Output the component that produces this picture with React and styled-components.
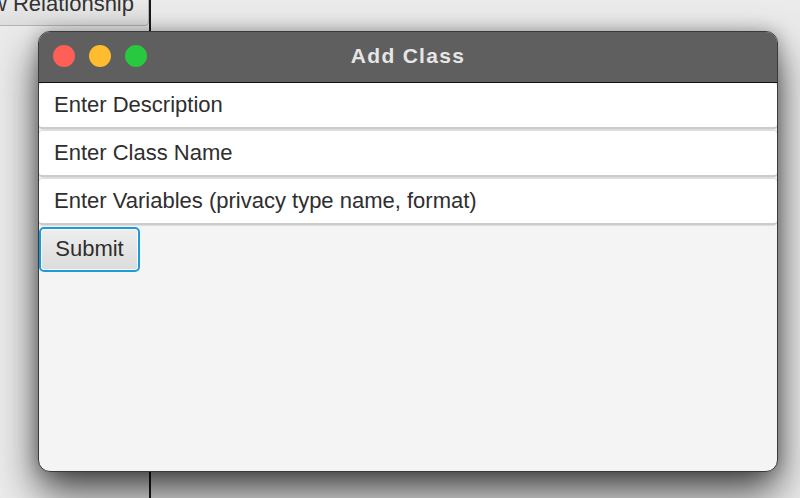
import styled, { createGlobalStyle } from 'styled-components';

const Global = createGlobalStyle`
  html, body { margin:0; padding:0; }
  body {
    width:800px; height:498px; overflow:hidden;
    background:#ececec;
    font-family:"Liberation Sans", Arial, sans-serif;
  }
`;

const Desktop = styled.div`
  position:relative; width:800px; height:498px; overflow:hidden;
  background:#ebebeb;
`;

const BackButton = styled.div`
  position:absolute; left:-60px; top:-13px;
  width:209px; height:39px;
  box-sizing:border-box;
  border:1px solid #b5b5b5; border-radius:4px;
  background:linear-gradient(#f0f0f0, #dedede);
  color:#333; font-size:22px;
  display:flex; align-items:flex-end; justify-content:flex-end;
  padding:0 14px 8px 0;
`;

const Divider = styled.div`
  position:absolute; left:149px; top:0; bottom:0; width:2px;
  background:#1a1a1a;
`;

const Window = styled.div`
  position:absolute; left:38px; top:31px;
  width:740px; height:441px; box-sizing:border-box;
  border:1px solid #3a3a3a; border-radius:12px;
  background:#f4f4f4; overflow:hidden;
  box-shadow:0 20px 40px rgba(0,0,0,0.7), 0 0 16px rgba(0,0,0,0.25);
  display:flex; flex-direction:column;
`;

const TitleBar = styled.div`
  height:51px; flex:none; box-sizing:border-box;
  background:#5f5f5f; border-bottom:1px solid #111;
  position:relative;
  display:flex; align-items:center; justify-content:center;
`;

const Lights = styled.div`
  position:absolute; left:14px; top:13px;
  display:flex; gap:14px;
`;

const Light = styled.span`
  width:22px; height:22px; border-radius:50%;
  background:${p => p.$c};
`;

const Title = styled.div`
  color:#e6e6e6; font-weight:bold; font-size:21px; letter-spacing:1.3px;
  margin-left:0; margin-top:-2px;
`;

const Body = styled.div`
  display:flex; flex-direction:column; gap:2px;
`;

const Field = styled.div`
  height:46px; box-sizing:border-box;
  background:#fff; border-radius:4px;
  border-bottom:2px solid #cbcbcb;
  box-shadow:0 0 0 1px #dedede;
  display:flex; align-items:center;
  padding:0 0 1px 15px;
  color:#2e2e2e; font-size:22px;
`;

const Submit = styled.div`
  align-self:flex-start;
  width:101px; height:45px; box-sizing:border-box;
  border:2px solid #1c9bd6; border-radius:5px;
  background:linear-gradient(#eeeeee, #dcdcdc);
  box-shadow:inset 0 0 0 1px #fff;
  color:#2e2e2e; font-size:22px;
  display:flex; align-items:center; justify-content:center;
  padding-bottom:2px;
`;

export default function App(){
  return (
    <Desktop>
      <Global />
      <BackButton>New Relationship</BackButton>
      <Divider />
      <Window>
        <TitleBar>
          <Lights>
            <Light $c="#fe5f57" />
            <Light $c="#febc2e" />
            <Light $c="#28c840" />
          </Lights>
          <Title>Add Class</Title>
        </TitleBar>
        <Body>
          <Field>Enter Description</Field>
          <Field>Enter Class Name</Field>
          <Field>Enter Variables (privacy type name, format)</Field>
          <Submit>Submit</Submit>
        </Body>
      </Window>
    </Desktop>
  );
}
